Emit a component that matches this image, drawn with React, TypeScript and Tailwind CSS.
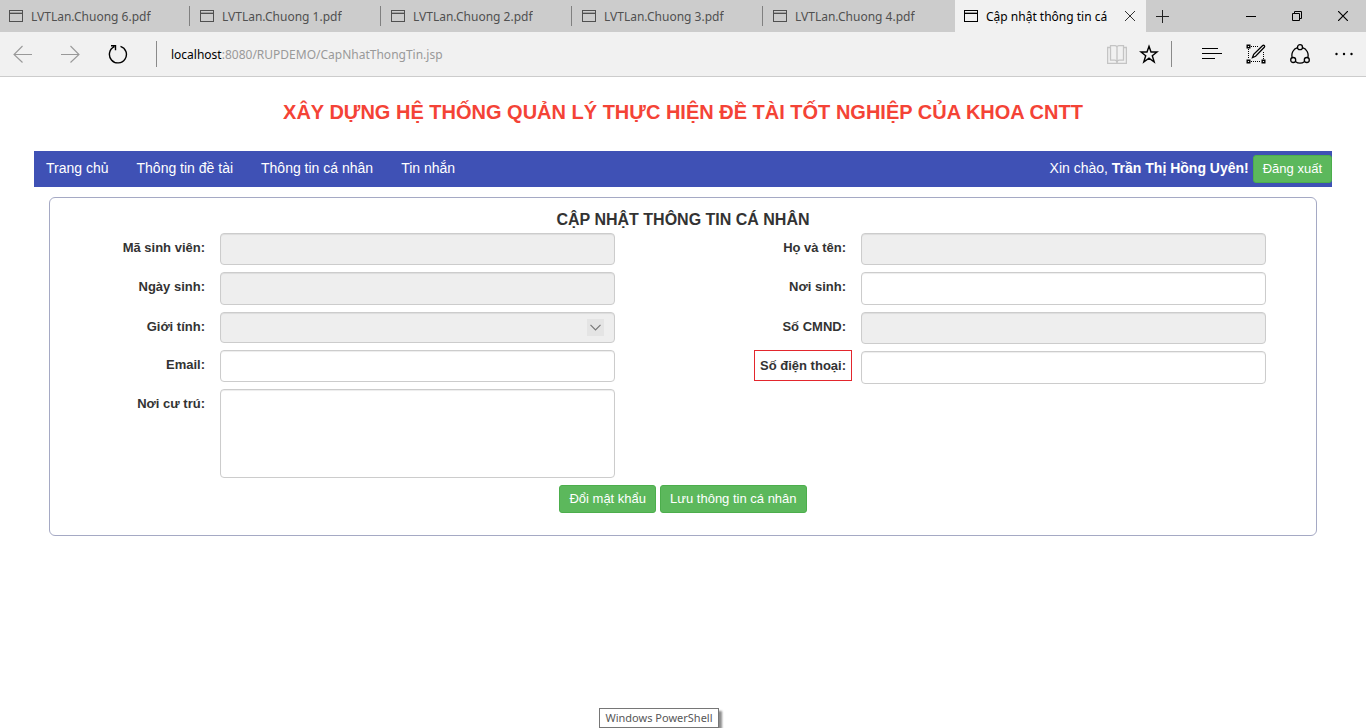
import React from "react";

const pdfTabs = ["LVTLan.Chuong 6.pdf", "LVTLan.Chuong 1.pdf", "LVTLan.Chuong 2.pdf", "LVTLan.Chuong 3.pdf", "LVTLan.Chuong 4.pdf"];

function PageIcon() {
  return (
    <svg width="14" height="12" viewBox="0 0 14 12" fill="none" stroke="currentColor" className="shrink-0" aria-hidden="true" shapeRendering="crispEdges">
      <path d="M.5 .5h13v11H.5z M.5 3.5h13" />
      <path d="M1 2h12" strokeOpacity=".35" />
    </svg>
  );
}

function TabStrip() {
  return (
    <div className="flex h-8 bg-[#cccccc] text-xs text-[#505050]">
      {pdfTabs.map((name, i) => (
        <button key={name} type="button" className="flex w-[191px] min-w-0 items-center">
          <span className="flex min-w-0 flex-1 items-center gap-2 pl-[9px]">
            <PageIcon />
            <span className="truncate pt-px">{name}</span>
          </span>
          <span className={i < 4 ? "mr-px h-5 w-px bg-[#808080]" : "mr-px h-5 w-px"} />
        </button>
      ))}
      <div className="flex w-[191px] min-w-0 items-center bg-[#f1f1f1] pl-[9px] text-black">
        <button type="button" className="flex min-w-0 flex-1 items-center gap-2">
          <PageIcon />
          <span className="overflow-hidden pt-px whitespace-nowrap">Cập nhật thông tin cá</span>
        </button>
        <button type="button" aria-label="Close tab" className="flex h-8 w-8 shrink-0 items-center justify-center text-[#333]">
          <svg width="10" height="10" viewBox="0 0 10 10" fill="none" stroke="currentColor"><path d="M0 0l10 10M10 0L0 10" /></svg>
        </button>
      </div>
      <button type="button" aria-label="New tab" className="flex w-8 items-center justify-center text-[#222]">
        <svg width="13" height="13" viewBox="0 0 13 13" fill="none" stroke="currentColor"><path d="M6.5 0v13M0 6.5h13" /></svg>
      </button>
      <div className="ml-auto flex text-black">
        <button type="button" aria-label="Minimize" className="flex w-[46px] items-center justify-center">
          <svg width="10" height="11" viewBox="0 0 10 11" fill="none" stroke="currentColor"><path d="M0 5.5h10" /></svg>
        </button>
        <button type="button" aria-label="Restore" className="flex w-[46px] items-center justify-center">
          <svg width="10" height="10" viewBox="0 0 10 10" fill="none" stroke="currentColor"><path d="M.5 2.5h7v7h-7z M2.5 2.5v-2h7v7h-2" /></svg>
        </button>
        <button type="button" aria-label="Close" className="flex w-[46px] items-center justify-center">
          <svg width="10" height="10" viewBox="0 0 10 10" fill="none" stroke="currentColor" strokeWidth="1.2"><path d="M0 0l10 10M10 0L0 10" /></svg>
        </button>
      </div>
    </div>
  );
}

function ToolBar() {
  return (
    <div className="flex h-[45px] items-center border-b border-[#cccccc] bg-[#f1f1f1]">
      <button type="button" aria-label="Back" className="flex h-11 w-[46px] items-center justify-center text-[#999]">
        <svg width="20" height="18" viewBox="0 0 20 18" fill="none" stroke="currentColor" strokeWidth="1.1"><path d="M19 9.500H1M9.500 1L1 9.500 9.500 17.500" /></svg>
      </button>
      <button type="button" aria-label="Forward" className="flex h-11 w-12 items-center justify-center text-[#999]">
        <svg width="20" height="18" viewBox="0 0 20 18" fill="none" stroke="currentColor" strokeWidth="1.1"><path d="M1 9.500h18M10.500 1L19 9.500l-8.500 8" /></svg>
      </button>
      <button type="button" aria-label="Refresh" className="flex h-11 w-12 items-center justify-center text-black">
        <svg width="20" height="20" viewBox="0 0 20 20" fill="none" stroke="currentColor" strokeWidth="1.4"><path d="M12.500 2.300a8.500 8.500 0 1 1-6.200.4M3 1.700h4.500v4.500" /></svg>
      </button>
      <span className="ml-3.5 h-[26px] w-px bg-[#8a8a8a]" />
      <label className="flex min-w-0 flex-1 items-center pt-px pl-3.5 text-xs">
        <span className="text-black">localhost</span>
        <input type="text" aria-label="Address" defaultValue=":8080/RUPDEMO/CapNhatThongTin.jsp" className="min-w-0 flex-1 bg-transparent text-[#999] outline-none" />
      </label>
      <button type="button" aria-label="Reading view" className="flex h-11 w-8 items-center justify-center text-[#c4c4c4]">
        <svg width="20" height="19" viewBox="0 0 20 19" fill="none" stroke="currentColor" strokeWidth="1.3">
          <path d="M3 2.500H.6v15.900h18.800V2.500H17M10 2v16M3.500.6h4.200Q10 .6 10 2.500 10 .6 12.300.6h4.200v14.500h-4.200Q10 15.100 10 18q0-2.900-2.300-2.900H3.500z" />
        </svg>
      </button>
      <button type="button" aria-label="Favorites" className="flex h-11 w-8 items-center justify-center text-black">
        <svg width="20" height="20" viewBox="0 0 20 20" fill="none" stroke="currentColor" strokeWidth="1.4" strokeLinejoin="miter"><path d="M10 2.300l2 5.700h6l-4.700 3.700 1.900 6.300L10 14.200 4.800 18l1.900-6.300L2 8h6z" /></svg>
      </button>
      <span className="mr-[18px] ml-1.5 h-[26px] w-px bg-[#8a8a8a]" />
      <button type="button" aria-label="Hub" className="flex h-11 w-11 items-center justify-center text-black">
        <svg width="20" height="12" viewBox="0 0 20 12" fill="none" stroke="currentColor" strokeWidth="1.2"><path d="M0 .5h16M0 5.500h20M0 10.500h13" /></svg>
      </button>
      <button type="button" aria-label="Make a web note" className="flex h-11 w-11 items-center justify-center text-black">
        <svg width="20" height="20" viewBox="0 0 20 20" fill="none" stroke="currentColor">
          <path d="M5 2.500h8M5 17.500h10M2.500 5v10M17.500 8v7" strokeDasharray="1 1" />
          <path d="M1.200 1.200h2.600v2.600H1.200zM1.200 16.200h2.600v2.600H1.200zM16.200 16.200h2.600v2.600h-2.600z" strokeWidth="1.400" />
          <path d="M6.500 13.500l1.200-3.200 9-8.700q.8-.7 1.600 0t0 1.700l-8.700 9z" strokeWidth="1.300" />
        </svg>
      </button>
      <button type="button" aria-label="Share" className="flex h-11 w-11 items-center justify-center text-black">
        <svg width="20" height="20" viewBox="0 0 20 20" fill="none" stroke="currentColor" strokeWidth="1.300">
          <circle cx="10" cy="3.200" r="2.500" />
          <circle cx="3.200" cy="16" r="2.500" />
          <circle cx="16.800" cy="16" r="2.500" />
          <path d="M7.500 3.600a8 8 0 0 0-5.300 9.900M12.500 3.600a8 8 0 0 1 5.300 9.900M5.300 17.500a8 8 0 0 0 9.400 0" />
        </svg>
      </button>
      <button type="button" aria-label="More actions" className="flex h-11 w-11 items-center justify-center text-black">
        <svg width="18" height="4" viewBox="0 0 18 4" fill="currentColor"><circle cx="1.500" cy="2" r="1.200" /><circle cx="9" cy="2" r="1.200" /><circle cx="16.500" cy="2" r="1.200" /></svg>
      </button>
    </div>
  );
}

const control = "block w-full rounded border border-[#cccccc] px-3 text-sm shadow-[inset_0_1px_1px_rgba(0,0,0,0.075)] outline-none disabled:bg-[#eeeeee]";
const labelStyle = "justify-self-end pt-1.5 text-[13px] leading-[18px] font-bold whitespace-nowrap";
const greenButton = "h-7 rounded-[3px] border border-[#4cae4c] bg-[#5cb85c] px-[9px] text-[13px] leading-[18px] whitespace-nowrap text-white";

function Field({ id, label, disabled = false, height = "h-8" }: { id: string; label: string; disabled?: boolean; height?: string }) {
  return (
    <>
      <label htmlFor={id} className={labelStyle}>{label}</label>
      <input id={id} type="text" disabled={disabled} className={`${control} ${height}`} />
      <span />
    </>
  );
}

export default function App() {
  return (
    <div className="flex min-h-screen flex-col bg-white font-['Liberation_Sans',Arial,sans-serif] text-[#333333]">
      <header className="font-['Noto_Sans','Open_Sans',sans-serif]">
        <TabStrip />
        <ToolBar />
      </header>

      <main className="px-[34px]">
        <h1 className="pt-5 pb-6 text-center text-xl leading-[30px] font-bold text-[#f44336]">
          XÂY DỰNG HỆ THỐNG QUẢN LÝ THỰC HIỆN ĐỀ TÀI TỐT NGHIỆP CỦA KHOA CNTT
        </h1>
        <nav className="flex h-9 items-center bg-[#3f51b5] pl-3 text-sm text-white">
          <div className="flex gap-7 pb-0.5">
            <a href="#home">Trang chủ</a>
            <a href="#topic">Thông tin đề tài</a>
            <a href="#profile">Thông tin cá nhân</a>
            <a href="#messages">Tin nhắn</a>
          </div>
          <div className="ml-auto flex items-center gap-1">
            <span className="pb-0.5">Xin chào, <b>Trần Thị Hồng Uyên!</b></span>
            <button type="button" className={greenButton}>Đăng xuất</button>
          </div>
        </nav>

        <form className="mx-[15px] mt-2.5 rounded-md border border-[#a5a9c4] pt-2.5 pb-[22px]" onSubmit={(e) => e.preventDefault()}>
          <h2 className="mb-px text-center text-base leading-6 font-bold">CẬP NHẬT THÔNG TIN CÁ NHÂN</h2>
          <div className="grid grid-cols-2 items-start">
            <div className="grid grid-cols-[155fr_395fr_53fr] items-start gap-x-[15px] gap-y-[7px]">
              <Field id="student-id" label="Mã sinh viên:" disabled />
              <Field id="birth-date" label="Ngày sinh:" disabled height="h-[33px]" />
              <label htmlFor="gender" className={labelStyle}>Giới tính:</label>
              <div className="relative">
                <select id="gender" disabled className={`${control} h-[31px] appearance-none`}><option value="" /></select>
                <span className="pointer-events-none absolute top-[7px] right-[11px] flex h-[17px] w-[17px] items-center justify-center bg-[#e4e4e4] text-[#777]">
                  <svg width="11" height="7" viewBox="0 0 11 7" fill="none" stroke="currentColor" strokeWidth="1.2"><path d="M.5 .8l5 5 5-5" /></svg>
                </span>
              </div>
              <span />
              <Field id="email" label="Email:" />
              <label htmlFor="address" className={labelStyle}>Nơi cư trú:</label>
              <textarea id="address" className={`${control} h-[89px] resize-none py-1.5`} />
              <span />
            </div>
            <div className="grid grid-cols-[163fr_405fr_35fr] items-start gap-x-[15px] gap-y-[7px]">
              <Field id="full-name" label="Họ và tên:" disabled />
              <Field id="birth-place" label="Nơi sinh:" height="h-[33px]" />
              <Field id="id-card" label="Số CMND:" disabled />
              <label htmlFor="phone" className="-mt-px -mr-1.5 h-[31px] justify-self-end border border-[#e3262d] px-[5px] pt-1.5 text-[13px] leading-[18px] font-bold whitespace-nowrap">
                Số điện thoại:
              </label>
              <input id="phone" type="text" className={`${control} h-[33px]`} />
              <span />
            </div>
          </div>
          <div className="mt-[7px] flex justify-center gap-1">
            <button type="button" className={greenButton}>Đổi mật khẩu</button>
            <button type="submit" className={greenButton}>Lưu thông tin cá nhân</button>
          </div>
        </form>
      </main>

      <footer className="mt-auto flex justify-center pr-12">
        <div role="tooltip" className="border border-[#767676] bg-white px-[5px] font-['Noto_Sans','Open_Sans',sans-serif] text-[11px] leading-[18px] text-[#575757] shadow-[3px_3px_2px_rgba(0,0,0,0.45)]">
          Windows PowerShell
        </div>
      </footer>
    </div>
  );
}
